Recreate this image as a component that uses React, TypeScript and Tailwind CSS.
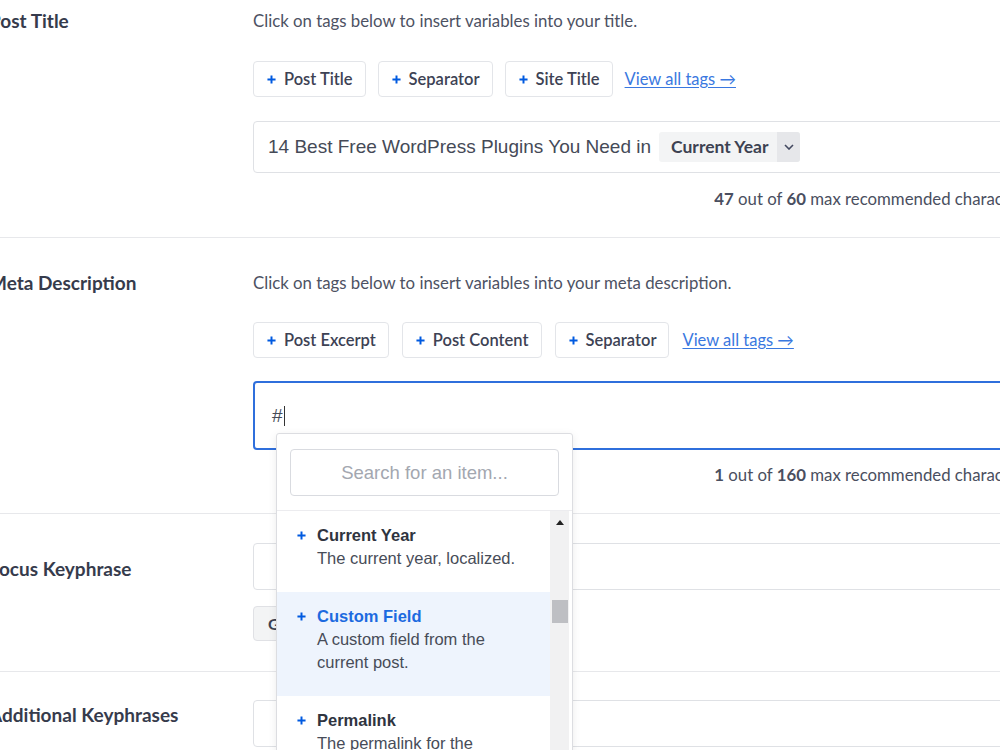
import type { ReactNode } from "react";

const UI = "font-['Lato','Open_Sans',sans-serif]";
const ARIAL = "font-['Liberation_Sans','Arial',sans-serif]";

const TITLE_TAGS = ["Post Title", "Separator", "Site Title"];
const META_TAGS = ["Post Excerpt", "Post Content", "Separator"];

const SMART_TAGS = [
  { title: "Current Year", desc: "The current year, localized.", active: false },
  { title: "Custom Field", desc: "A custom field from the current post.", active: true },
  { title: "Permalink", desc: "The permalink for the current page.", active: false },
  { title: "Post Date", desc: "The date when the post was published.", active: false }
];

function Plus({ className = "" }: { className?: string }) {
  return (
    <svg viewBox="0 0 10 10" className={`h-[9px] w-[9px] ${className}`} aria-hidden>
      <path d="M5 0.5v9M0.5 5h9" stroke="#005ae0" strokeWidth="2.2" />
    </svg>
  );
}

function TagButton({ label }: { label: string }) {
  return (
    <button
      type="button"
      className={`flex h-[36px] items-center gap-[8px] rounded-[4px] border border-[#e3e5e9] bg-white pl-[13px] pr-[12px] text-[16.5px] font-semibold text-[#3d4254] ${UI}`}
    >
      <Plus />
      <span>{label}</span>
    </button>
  );
}

function TagRow({ tags, gap }: { tags: string[]; gap: string }) {
  return (
    <div className={`flex items-center ${gap}`}>
      {tags.map((t) => (
        <TagButton key={t} label={t} />
      ))}
      <a className={`text-[16.5px] text-[#3a78e0] underline underline-offset-2 ${UI}`}>View all tags →</a>
    </div>
  );
}

function Section({ label, labelPad, children, pad }: { label: string; labelPad: string; pad: string; children: ReactNode }) {
  return (
    <div className="flex border-b border-[#e7e8eb]">
      <div className={`w-[264px] shrink-0 ${labelPad}`}>
        <h3 className={`text-[19px] leading-[24px] font-bold text-[#363b4c] ${UI}`}>{label}</h3>
      </div>
      <div className={`flex-1 min-w-0 pr-[16px] ${pad}`}>{children}</div>
    </div>
  );
}

function Counter({ count, max }: { count: number; max: number }) {
  return (
    <p className={`pr-[23px] text-right text-[16.8px] leading-[20px] text-[#4a4f60] ${UI}`}>
      <span className="font-bold">{count}</span> out of <span className="font-bold">{max}</span> max recommended characters.
    </p>
  );
}

function SmartTagMenu() {
  return (
    <div className="absolute left-[23px] top-[52px] z-10 h-[330px] w-[297px] rounded-[3px] border border-[#dcdde1] bg-white shadow-[0_2px_8px_rgba(0,0,0,0.08)]">
      <div className="mx-[13px] mt-[15px] flex h-[47px] items-center justify-center rounded-[4px] border border-[#d9dbe0]">
        <span className={`text-[18.5px] text-[#a3a7b0] ${ARIAL}`}>Search for an item...</span>
      </div>
      <div className="mt-[14px] flex h-[260px] border-t border-[#ececef]">
        <ul className="w-[273px] overflow-hidden">
          {SMART_TAGS.map((tag) => (
            <li
              key={tag.title}
              className={`flex pl-[20px] pr-[24px] pt-[13px] pb-[22px] ${tag.active ? "bg-[#eef4fd]" : "bg-white"} ${ARIAL}`}
            >
              <div className="flex h-[23px] w-[20px] shrink-0 items-center">
                <Plus />
              </div>
              <div>
                <p className={`text-[16.5px] leading-[23px] font-bold ${tag.active ? "text-[#1c6ae0]" : "text-[#2f3440]"}`}>
                  {tag.title}
                </p>
                <p className="text-[16.5px] leading-[23px] text-[#474c58]">{tag.desc}</p>
              </div>
            </li>
          ))}
        </ul>
        <div className="relative w-[19px] bg-[#f1f1f2]">
          <div className="mx-auto mt-[9px] h-0 w-0 border-x-[4px] border-b-[5px] border-x-transparent border-b-[#222]" />
          <div className="mx-auto mt-[75px] h-[23px] w-[16px] bg-[#bebfc3]" />
        </div>
      </div>
    </div>
  );
}

export default function App() {
  return (
    <div className="relative h-[750px] w-[1000px] overflow-hidden bg-white">
      <div className="ml-[-11px] w-[1085px]">
        <Section label="Post Title" labelPad="pt-[9px]" pad="pt-[11px] pb-[28px]">
          <p className={`text-[16.8px] leading-[20px] text-[#4d5263] ${UI}`}>Click on tags below to insert variables into your title.</p>
          <div className="mt-[30px]">
            <TagRow tags={TITLE_TAGS} gap="gap-[12px]" />
          </div>
          <div className="mt-[24px] flex h-[52px] items-center rounded-[4px] border border-[#dfe1e5] pl-[14px]">
            <span className={`text-[19px] text-[#454a57] ${ARIAL}`}>14 Best Free WordPress Plugins You Need in</span>
            <span className="ml-[8px] flex h-[30px] items-stretch overflow-hidden rounded-[3px] bg-[#f3f4f5]">
              <span className={`flex items-center pl-[12px] pr-[9px] text-[17.5px] font-bold text-[#3d4252] ${UI}`}>Current Year</span>
              <span className="flex w-[23px] items-center justify-center bg-[#e6e7ea]">
                <svg viewBox="0 0 10 6" className="h-[6px] w-[10px]" aria-hidden>
                  <path d="M1 1l4 4 4-4" fill="none" stroke="#434960" strokeWidth="1.6" />
                </svg>
              </span>
            </span>
          </div>
          <div className="mt-[16px]">
            <Counter count={47} max={60} />
          </div>
        </Section>

        <Section label="Meta Description" labelPad="pt-[33px]" pad="pt-[35px] pb-[28px]">
          <p className={`text-[16.8px] leading-[20px] text-[#4d5263] ${UI}`}>Click on tags below to insert variables into your meta description.</p>
          <div className="mt-[29px]">
            <TagRow tags={META_TAGS} gap="gap-[13px]" />
          </div>
          <div className="relative mt-[23px]">
            <div className="h-[69px] rounded-[4px] border-2 border-[#2f6fdc] pl-[17px] pt-[21px]">
              <span className={`flex items-center text-[19px] leading-[24px] text-[#454a57] ${ARIAL}`}>
                #<span className="ml-[1px] inline-block h-[20px] w-[1.5px] bg-[#333]" />
              </span>
            </div>
            <SmartTagMenu />
          </div>
          <div className="mt-[15px]">
            <Counter count={1} max={160} />
          </div>
        </Section>

        <Section label="Focus Keyphrase" labelPad="pt-[43px]" pad="pt-[29px] pb-[30px]">
          <div className="h-[47px] rounded-[4px] border border-[#dfe1e5] bg-white" />
          <button
            type="button"
            className={`mt-[16px] flex h-[35px] items-center rounded-[4px] border border-[#e0e1e5] bg-[#f3f4f5] px-[14px] text-[16px] font-bold text-[#3d4252] ${UI}`}
          >
            Get Additional Keyphrases
          </button>
        </Section>

        <Section label="Additional Keyphrases" labelPad="pt-[31px]" pad="pt-[28px] pb-[30px]">
          <div className="h-[47px] rounded-[4px] border border-[#dfe1e5] bg-white" />
        </Section>
      </div>
    </div>
  );
}
